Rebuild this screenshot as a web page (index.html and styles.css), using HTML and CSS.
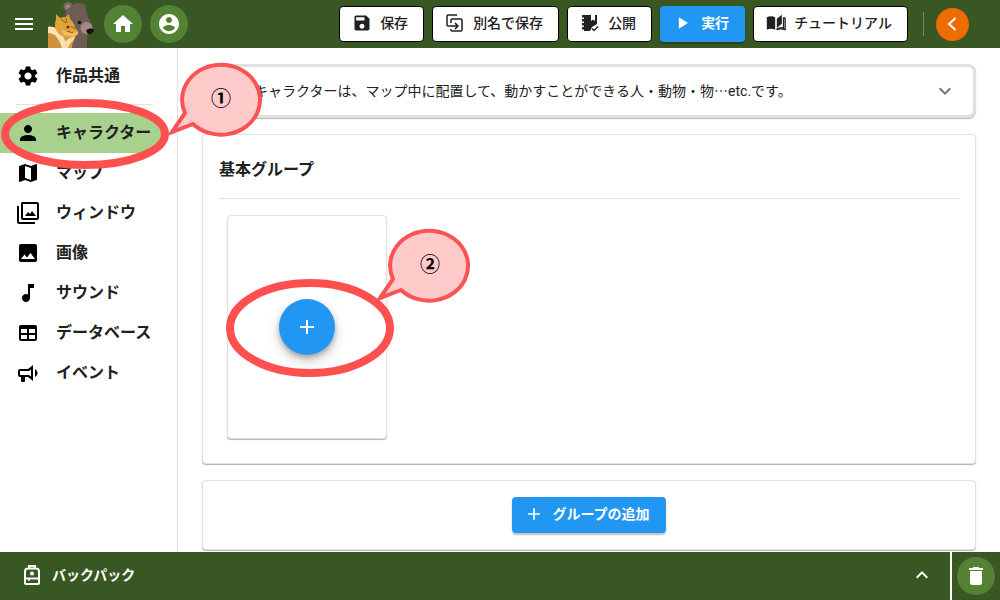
FILE: index.html
```html
<!DOCTYPE html>
<html lang="ja">
<head>
<meta charset="utf-8">
<meta name="viewport" content="width=device-width, initial-scale=1">
<title>キャラクター</title>
<link rel="stylesheet" href="styles.css">
</head>
<body>
<header class="topbar">
  <button class="icon-button menu-button" aria-label="メニュー"><svg class="icon" viewBox="0 0 24 24"><path d="M3 18h18v-2H3v2zm0-5h18v-2H3v2zm0-7v2h18V6H3z"/></svg></button>
  <svg class="mascot" viewBox="0 0 48 48" aria-hidden="true">
    <circle cx="20" cy="6.500" r="4.500" fill="#7d665d"/><circle cx="20" cy="7" r="2.500" fill="#a08478"/>
    <circle cx="35" cy="6" r="3" fill="#65524b"/>
    <path d="M17 14C20 7 25 3 31 3c5 0 7 5 8 11 1 5 5 8 6 14-1 5-4 7-6 8v12H18z" fill="#6f5c55"/>
    <ellipse cx="38.500" cy="28" rx="6" ry="6" fill="#a18a80"/>
    <path d="M38 31c2-3 6-3 8-1-1 4-4 5-6 4z" fill="#17120f"/><circle cx="31.500" cy="22.500" r="1.700" fill="#17120f"/>
    <path d="M0 27h8l10 8h10c-1 5-4 8-4 13H0z" fill="#d99a3d"/>
    <path d="M0 27c3-1 6 0 8 2l7 7 5 12h-6C12 40 8 36 0 35z" fill="#fae3ba"/>
    <path d="M0 33c7 0 11 5 13 15H0z" fill="#d0933a"/>
    <path d="M27 36c-1 5-5 6-7 12h-5c0-6 5-10 12-12z" fill="#f5dcae"/>
    <path d="M8 19V14l4 4c2-1 4-1 6-1l3-3 1 5c4 3 4 7 6 10 3 2 3 5 1 6-4 3-12 3-17 0-5-4-6-11-4-16z" fill="#e0a33a"/>
    <path d="M14 29c5 4 10 5 16 3 0 4-5 4-9 4-5 0-8-3-7-7z" fill="#f0bf67"/>
    <path d="M13 19l5 4M18 18l1 5M23 26l4 3M19 31l6 2" fill="none" stroke="#8c5a1d" stroke-width="1"/>
    <circle cx="20" cy="27" r="1.600" fill="#5b3a18"/>
  </svg>
  <button class="round-button home-button" aria-label="ホーム"><svg class="icon" viewBox="0 0 24 24"><path d="M10 20v-6h4v6h5v-8h3L12 3 2 12h3v8z"/></svg></button>
  <button class="round-button" aria-label="アカウント"><svg class="icon" viewBox="0 0 24 24"><path d="M12 2C6.480 2 2 6.480 2 12s4.480 10 10 10 10-4.480 10-10S17.520 2 12 2zm0 3c1.660 0 3 1.340 3 3s-1.340 3-3 3-3-1.340-3-3 1.340-3 3-3zm0 14.200c-2.500 0-4.710-1.280-6-3.220.030-1.990 4-3.080 6-3.080 1.990 0 5.970 1.090 6 3.080-1.290 1.940-3.500 3.220-6 3.220z"/></svg></button>
  <div class="actions">
    <button class="button button-outlined"><svg class="icon-small" viewBox="0 0 24 24"><path d="M17 3H5c-1.110 0-2 .9-2 2v14c0 1.100.890 2 2 2h14c1.100 0 2-.9 2-2V7l-4-4zm-5 16c-1.660 0-3-1.340-3-3s1.340-3 3-3 3 1.340 3 3-1.340 3-3 3zm3-10H5V5h10v4z"/></svg>保存</button>
    <button class="button button-outlined"><svg class="icon-small icon-line" viewBox="0 0 20 20"><path d="M4 13H3a1 1 0 0 1-1-1V3a1 1 0 0 1 1-1h9M6 10V7a1 1 0 0 1 1-1h9a1 1 0 0 1 1 1v10a1 1 0 0 1-1 1H7a1 1 0 0 1-1-1v-1M4 13h8M10 10l3 3-3 3"/></svg>別名で保存</button>
    <button class="button button-outlined"><svg class="icon-small" viewBox="0 0 20 20"><path d="M4 2h7v6l2-1.500L15 8V2h2v9l-5 3-2 4H4v-2H2v-2h2v-2H2v-2h2V8H2V6h2V4H2V2z"/><path d="M12 15.500l2 2 4-4" fill="none" stroke="currentColor" stroke-width="1.500"/><path d="M2 4h3M2 8h3M2 12h3M2 16h3" stroke="currentColor"/></svg>公開</button>
    <button class="button button-primary"><svg class="icon-small" viewBox="0 0 24 24"><path d="M7 5v14l11-7z"/></svg>実行</button>
    <button class="button button-outlined"><svg class="icon-small" viewBox="0 0 24 24"><path d="M1 5c3-1.500 7-1.500 10 0v15c-3-1.500-7-1.500-10 0z"/><path d="M19 2l-6 5v11l6-5z"/><path d="M21 5.500V18c-3-.8-6 0-8.500 1.500M21 5.500c1 .2 1.500.5 2 1V20c-3-1.300-7-1.300-10.500 0" fill="none" stroke="currentColor" stroke-width="1.500"/></svg>チュートリアル</button>
  </div>
  <span class="separator"></span>
  <button class="round-button collapse-button" aria-label="閉じる"><svg class="icon" viewBox="0 0 24 24"><path d="M14.500 6L8 12l6.500 6" fill="none" stroke="currentColor" stroke-width="2"/></svg></button>
</header>

<div class="workspace">
  <nav class="sidebar">
    <a class="nav-item" href="#common"><svg class="icon" viewBox="0 0 24 24"><path d="M19.140 12.940c.040-.3.060-.610.060-.940s-.020-.640-.070-.940l2.030-1.580c.180-.140.230-.410.120-.610l-1.920-3.320c-.120-.220-.370-.290-.590-.220l-2.390.960c-.5-.380-1.030-.7-1.620-.940l-.360-2.540c-.040-.240-.240-.410-.480-.410h-3.840c-.240 0-.430.170-.470.410l-.360 2.540c-.590.240-1.130.570-1.620.940l-2.390-.960c-.220-.080-.470 0-.590.220L2.740 8.870c-.120.210-.080.470.120.610l2.030 1.580c-.050.3-.090.630-.090.940s.020.640.070.940l-2.030 1.580c-.180.140-.230.410-.120.610l1.920 3.320c.120.220.370.290.590.220l2.390-.960c.5.380 1.030.7 1.620.940l.360 2.540c.050.240.240.410.480.410h3.840c.240 0 .440-.170.470-.410l.360-2.540c.590-.240 1.130-.560 1.620-.940l2.390.960c.220.080.470 0 .590-.220l1.920-3.320c.120-.220.070-.470-.120-.610l-2.010-1.580zM12 15.600c-1.980 0-3.600-1.620-3.600-3.600s1.620-3.600 3.600-3.600 3.600 1.620 3.600 3.600-1.620 3.600-3.600 3.600z"/></svg>作品共通</a>
    <hr class="nav-divider">
    <div class="callout-anchor">
      <a class="nav-item nav-item-selected" href="#characters"><svg class="icon" viewBox="0 0 24 24"><path d="M12 12c2.210 0 4-1.790 4-4s-1.790-4-4-4-4 1.790-4 4 1.790 4 4 4zm0 2c-2.670 0-8 1.340-8 4v2h16v-2c0-2.660-5.330-4-8-4z"/></svg>キャラクター</a>
      <div class="callout callout-nav">
        <svg class="callout-shape" width="270" height="120" viewBox="0 0 270 120">
          <ellipse class="ring" cx="85" cy="81" rx="80" ry="31"/>
          <path class="bubble" d="M185 60A39 35 0 1 1 193 71L172 79z"/>
        </svg>
        <span class="callout-number">①</span>
      </div>
    </div>
    <a class="nav-item" href="#maps"><svg class="icon" viewBox="0 0 24 24"><path d="M20.500 3l-.160.030L15 5.100 9 3 3.360 4.900c-.210.070-.360.250-.360.480V20.500c0 .280.220.5.500.5l.160-.030L9 18.900l6 2.100 5.640-1.900c.210-.070.360-.250.360-.480V3.500c0-.280-.220-.5-.5-.5zM15 19l-6-2.110V5l6 2.110V19z"/></svg>マップ</a>
    <a class="nav-item" href="#windows"><svg class="icon" viewBox="0 0 24 24"><path d="M6 1h15a2 2 0 0 1 2 2v14a2 2 0 0 1-2 2H7a2 2 0 0 1-2-2V2zM7 3v14h14V3zM1 5h2v16h16v2H3a2 2 0 0 1-2-2z" fill-rule="evenodd"/><path d="M9 15l3-4 2 2 2-3 4 5z"/></svg>ウィンドウ</a>
    <a class="nav-item" href="#images"><svg class="icon" viewBox="0 0 24 24"><path d="M21 19V5c0-1.100-.9-2-2-2H5c-1.100 0-2 .9-2 2v14c0 1.100.9 2 2 2h14c1.100 0 2-.9 2-2zM8.500 13.500l2.500 3.010L14.500 12l4.500 6H5l3.500-4.500z"/></svg>画像</a>
    <a class="nav-item" href="#sounds"><svg class="icon" viewBox="0 0 24 24"><path d="M12 3v10.550c-.590-.340-1.270-.550-2-.550-2.210 0-4 1.790-4 4s1.790 4 4 4 4-1.790 4-4V7h4V3h-6z"/></svg>サウンド</a>
    <a class="nav-item" href="#database"><svg class="icon" viewBox="0 0 24 24"><path fill-rule="evenodd" d="M5 4h14a2 2 0 0 1 2 2v12a2 2 0 0 1-2 2H5a2 2 0 0 1-2-2V6c0-1.100.9-2 2-2zm0 4v4h6V8zm8 0v4h6V8zm-8 6v4h6v-4zm8 0v4h6v-4z"/></svg>データベース</a>
    <a class="nav-item" href="#events"><svg class="icon" viewBox="0 0 24 24"><path d="M12 8H4a2 2 0 0 0-2 2v4a2 2 0 0 0 2 2h1v4a1 1 0 0 0 1 1h2a1 1 0 0 0 1-1v-4h3l5 4V4l-5 4m3 7.600L13 14H4v-4h9l2-1.600v7.200m6.500-3.600c0 1.710-.960 3.260-2.500 4V8c1.530.750 2.500 2.300 2.500 4z"/></svg>イベント</a>
  </nav>

  <main class="content">
    <button class="panel notice" aria-expanded="false"><span>キャラクターは、マップ中に配置して、動かすことができる人・動物・物<span class="ellipsis">…</span>etc.です。</span><svg class="icon" viewBox="0 0 24 24"><path d="M7.410 8.590L12 13.170l4.590-4.580L18 10l-6 6-6-6z"/></svg></button>
    <section class="panel group">
      <h2 class="group-title">基本グループ</h2>
      <div class="group-items">
        <div class="panel add-card">
          <button class="fab" aria-label="キャラクターの追加"><svg class="icon" viewBox="0 0 24 24"><path d="M19 13h-6v6h-2v-6H5v-2h6V5h2v6h6z"/></svg></button>
          <div class="callout callout-add">
            <svg class="callout-shape" width="250" height="160" viewBox="0 0 250 160">
              <ellipse class="ring" cx="86" cy="104" rx="80" ry="45"/>
              <path class="bubble" d="M169 55A39 35 0 1 1 177 66L156 74z"/>
            </svg>
            <span class="callout-number">②</span>
          </div>
        </div>
      </div>
    </section>
    <section class="panel group-add">
      <button class="button button-primary button-wide"><svg class="icon-small" viewBox="0 0 24 24"><path d="M19 13h-6v6h-2v-6H5v-2h6V5h2v6h6z"/></svg>グループの追加</button>
    </section>
  </main>
</div>

<footer class="bottombar">
  <button class="backpack" aria-expanded="false"><svg class="icon" viewBox="0 0 24 24"><path d="M9 5V3h6v2M8 5.500a3 3 0 0 0-3 3V20a1 1 0 0 0 1 1h12a1 1 0 0 0 1-1V8.500a3 3 0 0 0-3-3zM5 15.500h14" fill="none" stroke="currentColor" stroke-width="2"/><path d="M8 16h1.500v2H8z"/><circle cx="12" cy="10.500" r="2"/></svg><span class="backpack-label">バックパック</span><svg class="icon" viewBox="0 0 24 24"><path d="M7.410 15.410L12 10.830l4.590 4.580L18 14l-6-6-6 6z"/></svg></button>
  <div class="trash">
    <button class="round-button" aria-label="ごみ箱"><svg class="icon" viewBox="0 0 24 24"><path d="M6 19c0 1.100.9 2 2 2h8c1.100 0 2-.9 2-2V7H6v12zM19 4h-3.500l-1-1h-5l-1 1H5v2h14V4z"/></svg></button>
  </div>
</footer>
</body>
</html>
```
FILE: styles.css
```css
* {
  box-sizing: border-box;
}

body {
  display: flex;
  flex-direction: column;
  height: 100vh;
  margin: 0;
  overflow: hidden;
  background: #fff;
  color: #212121;
  font-family: Roboto, "Noto Sans CJK JP", sans-serif;
  font-size: 14px;
  line-height: 20px;
}

button {
  border: 0;
  padding: 0;
  background: none;
  color: inherit;
  font: inherit;
  cursor: pointer;
}

svg {
  display: block;
  flex: none;
  fill: currentColor;
}

.icon {
  width: 24px;
  height: 24px;
}

.icon-small {
  width: 20px;
  height: 20px;
}

.icon-line {
  fill: none;
  stroke: currentColor;
  stroke-width: 1.5;
}

/* Top bar */
.topbar {
  display: flex;
  flex: none;
  align-items: center;
  height: 48px;
  padding: 0 31px 0 12px;
  background: #385723;
  color: #fff;
}

.menu-button {
  margin-right: 12px;
}

.mascot {
  width: 48px;
  height: 48px;
  margin-right: 8px;
}

.round-button {
  display: grid;
  flex: none;
  place-items: center;
  width: 38px;
  height: 38px;
  border-radius: 50%;
  background: #548235;
  color: #fff;
}

.home-button {
  margin-right: 8px;
}

.actions {
  display: flex;
  gap: 8px;
  margin-left: auto;
}

.button {
  display: flex;
  align-items: center;
  gap: 8px;
  height: 36px;
  padding: 0 16px 2px 12px;
  border-radius: 4px;
  font-weight: 500;
  white-space: nowrap;
}

.button-outlined {
  padding-right: 15px;
  border: 1px solid #000;
  background: #fff;
  color: #212121;
}

.button-primary {
  padding: 0 16px 2px 13px;
  background: #2196f3;
  color: #fff;
  font-weight: 700;
  box-shadow: 0 2px 2px rgba(0, 0, 0, 0.25);
}

.separator {
  width: 1px;
  height: 24px;
  margin: 0 12px 0 15px;
  background: #71846a;
}

.collapse-button {
  width: 33px;
  height: 33px;
  background: #ef6c00;
}

/* Navigation */
.workspace {
  display: flex;
  flex: 1;
  min-height: 0;
}

.sidebar {
  z-index: 1;
  flex: none;
  width: 178px;
  padding-top: 8px;
  border-right: 1px solid #e0e0e0;
}

.nav-item {
  display: flex;
  align-items: center;
  gap: 16px;
  height: 40px;
  padding-left: 16px;
  color: #212121;
  font-size: 16px;
  font-weight: 700;
  text-decoration: none;
}

.nav-item .icon {
  color: #000;
}

.nav-divider {
  height: 1px;
  margin: 8px 24px 8px 16px;
  border: 0;
  background: #e0e0e0;
}

.nav-item-selected {
  width: 165px;
  border-radius: 0 20px 20px 0;
  background: #a9d18e;
}

/* Main content */
.content {
  flex: 1;
  min-width: 0;
  padding: 16px 24px 0;
  overflow: hidden;
}

.panel {
  border: 1px solid #e0e0e0;
  border-radius: 4px;
  background: #fff;
  box-shadow: 0 1px 1px rgba(0, 0, 0, 0.3);
}

.notice {
  display: flex;
  align-items: center;
  justify-content: space-between;
  width: 100%;
  height: 54px;
  padding: 0 16px 0 49px;
  border-width: 3px;
  border-radius: 8px;
  text-align: left;
}

.ellipsis {
  font-family: "Noto Sans CJK JP", sans-serif;
  line-height: 1;
}

.notice .icon {
  color: #757575;
}

.group {
  margin-top: 16px;
  padding: 16px 16px 24px;
}

.group-title {
  margin: 0;
  padding: 9px 0 18px;
  border-bottom: 1px solid #e0e0e0;
  font-size: 16px;
  line-height: 20px;
}

.group-items {
  display: flex;
  flex-wrap: wrap;
  gap: 16px;
  padding: 16px 8px 0;
}

.add-card {
  position: relative;
  display: grid;
  place-items: center;
  width: 160px;
  height: 224px;
}

.fab {
  display: grid;
  place-items: center;
  width: 56px;
  height: 56px;
  border-radius: 50%;
  background: #2196f3;
  color: #fff;
  box-shadow: 0 3px 5px rgba(0, 0, 0, 0.25), 0 6px 14px rgba(0, 0, 0, 0.18);
}

.group-add {
  display: flex;
  justify-content: center;
  margin-top: 16px;
  padding: 16px;
}

.button-wide {
  padding: 0 16px 2px 12px;
}

/* Numbered callouts over the interface */
.callout-anchor {
  position: relative;
}

.callout {
  position: absolute;
  z-index: 2;
  pointer-events: none;
}

.callout-nav {
  top: -60px;
  left: 0;
}

.callout-add {
  top: 8px;
  left: -4px;
}

.ring {
  fill: none;
  stroke: #ff5050;
  stroke-width: 8;
}

.bubble {
  fill: #ffcaca;
  stroke: #f95355;
  stroke-width: 4;
}

.callout-number {
  position: absolute;
  color: #000;
  font-family: "Noto Sans CJK JP", sans-serif;
  font-size: 20px;
  font-weight: 700;
  line-height: 24px;
}

.callout-nav .callout-number {
  top: 33px;
  left: 211px;
}

.callout-add .callout-number {
  top: 28px;
  left: 196px;
}

/* Bottom bar */
.bottombar {
  display: flex;
  flex: none;
  height: 48px;
  background: #385723;
  color: #fff;
}

.backpack {
  display: flex;
  flex: 1;
  align-items: center;
  gap: 8px;
  padding: 0 16px 2px 20px;
  text-align: left;
}

.backpack-label {
  flex: 1;
  font-weight: 700;
}

.trash {
  display: grid;
  place-items: center;
  width: 50px;
  border-left: 2px solid #fff;
}
```
